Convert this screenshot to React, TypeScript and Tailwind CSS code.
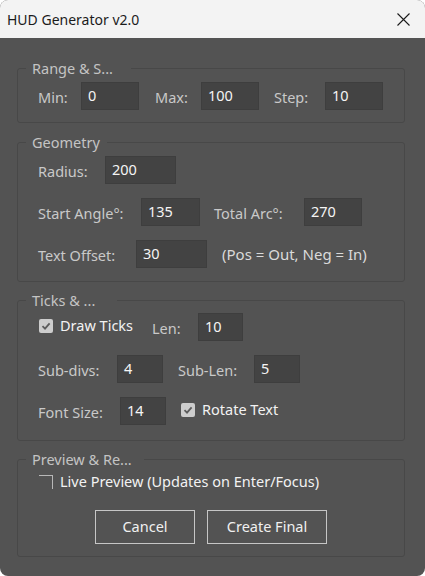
import React from 'react';

const font = { fontFamily: '"Noto Sans", "Open Sans", Arial, sans-serif' };

// 数値入力欄
const NumField = ({ value, w }: { value: string; w: string }) => (
  <div
    className={`${w} h-[28px] shrink-0 bg-[#434343] border border-[#3e3e3e] flex items-center pl-[6px] text-[14.5px] text-[#f5f5f5]`}
  >
    {value}
  </div>
);

const Label = ({ text, w }: { text: string; w: string }) => (
  <span className={`${w} shrink-0 mt-[3px] text-[14.5px] text-[#c9c9c9] whitespace-nowrap`}>{text}</span>
);

const CheckBox = ({ checked, label }: { checked: boolean; label: string }) => (
  <div className="flex items-center">
    {checked ? (
      <span className="w-[14px] h-[14px] ml-[1px] rounded-[2px] bg-[#cdcdcd] flex items-center justify-center">
        <svg width="10" height="10" viewBox="0 0 10 10">
          <path d="M1.5 5.2 L4 7.6 L8.6 2.4" fill="none" stroke="#5c5c5c" strokeWidth="1.8" />
        </svg>
      </span>
    ) : (
      <span className="w-[14px] h-[14px] ml-[1px] border-t border-r border-[#b8b8b8]" />
    )}
    <span className="ml-[7px] text-[14.5px] text-[#f2f2f2] whitespace-nowrap">{label}</span>
  </div>
);

const Group = ({
  title,
  legendW,
  className,
  children,
}: {
  title: string;
  legendW: string;
  className: string;
  children: React.ReactNode;
}) => (
  <fieldset className={`border border-[#484848] rounded-[3px] ${className}`}>
    <legend className={`${legendW} ml-[8px] pl-[6px] h-[20px] leading-[20px] text-[14.5px] text-[#c4c4c4] whitespace-nowrap`}>
      {title}
    </legend>
    <div className="pl-[20px]">{children}</div>
  </fieldset>
);

export default function App() {
  return (
    <div className="w-[425px] h-[576px] bg-white" style={font}>
      <div className="w-full h-full rounded-[8px] overflow-hidden bg-[#535353] flex flex-col">
        {/* タイトルバー */}
        <div className="h-[38px] shrink-0 bg-[#f3f3f3] flex items-center justify-between pl-[7px] pr-[15px]">
          <span className="text-[14px] text-[#1b1b1b]">HUD Generator v2.0</span>
          <svg width="13" height="13" viewBox="0 0 13 13">
            <path d="M0.5 0.5 L12.5 12.5 M12.5 0.5 L0.5 12.5" stroke="#1b1b1b" strokeWidth="1.1" />
          </svg>
        </div>

        <div className="flex flex-col pl-[17px] pr-[20px] pt-[20px]">
          <Group title="Range & S..." legendW="w-[105px]" className="pt-[4px] pb-[12px]">
            <div className="flex items-center">
              <Label text="Min:" w="w-[43px]" />
              <NumField value="0" w="w-[58px]" />
              <span className="w-[16px]" />
              <Label text="Max:" w="w-[46px]" />
              <NumField value="100" w="w-[58px]" />
              <span className="w-[15px]" />
              <Label text="Step:" w="w-[51px]" />
              <NumField value="10" w="w-[58px]" />
            </div>
          </Group>

          <Group title="Geometry" legendW="w-[81px]" className="mt-[9px] pt-[4px] pb-[13px]">
            <div className="flex flex-col gap-[14px]">
              <div className="flex items-center">
                <Label text="Radius:" w="w-[67px]" />
                <NumField value="200" w="w-[71px]" />
              </div>
              <div className="flex items-center">
                <Label text="Start Angle°:" w="w-[103px]" />
                <NumField value="135" w="w-[59px]" />
                <span className="w-[14px]" />
                <Label text="Total Arc°:" w="w-[90px]" />
                <NumField value="270" w="w-[58px]" />
              </div>
              <div className="flex items-center">
                <Label text="Text Offset:" w="w-[98px]" />
                <NumField value="30" w="w-[71px]" />
                <span className="ml-[15px] mt-[1px] text-[15px] text-[#dadada] whitespace-nowrap">
                  (Pos = Out, Neg = In)
                </span>
              </div>
            </div>
          </Group>

          <Group title="Ticks & ..." legendW="w-[91px]" className="mt-[8px] pt-[3px] pb-[15px]">
            <div className="flex flex-col gap-[14px]">
              <div className="flex items-center">
                <div className="w-[114px] mb-[3px]">
                  <CheckBox checked label="Draw Ticks" />
                </div>
                <Label text="Len:" w="w-[46px]" />
                <NumField value="10" w="w-[45px]" />
              </div>
              <div className="flex items-center">
                <Label text="Sub-divs:" w="w-[79px]" />
                <NumField value="4" w="w-[46px]" />
                <span className="w-[15px]" />
                <Label text="Sub-Len:" w="w-[76px]" />
                <NumField value="5" w="w-[46px]" />
              </div>
              <div className="flex items-center">
                <Label text="Font Size:" w="w-[82px]" />
                <NumField value="14" w="w-[46px]" />
                <span className="w-[14px]" />
                <div className="mb-[3px]">
                  <CheckBox checked label="Rotate Text" />
                </div>
              </div>
            </div>
          </Group>

          <Group title="Preview & Re..." legendW="w-[118px]" className="mt-[8px] pt-[3px] pb-[12px]">
            <div className="h-[20px] flex items-center">
              <CheckBox checked={false} label="Live Preview (Updates on Enter/Focus)" />
            </div>
            <div className="mt-[18px] pr-[20px] flex justify-center gap-[12px]">
              <button className="w-[100px] h-[34px] border border-[#c6c6c6] text-[14.5px] text-[#f0f0f0]">
                Cancel
              </button>
              <button className="w-[120px] h-[34px] border border-[#c6c6c6] text-[14.5px] text-[#f0f0f0]">
                Create Final
              </button>
            </div>
          </Group>
        </div>
      </div>
    </div>
  );
}
